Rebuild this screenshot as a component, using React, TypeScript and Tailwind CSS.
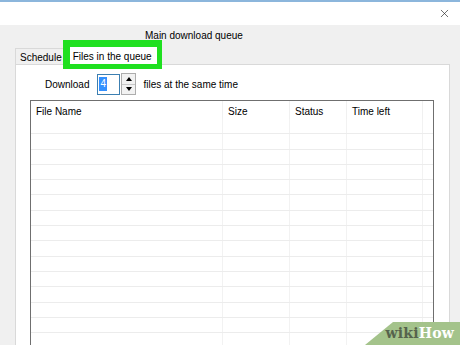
import { X } from "lucide-react";

const columns = [
    { label: "File Name", width: "w-[192px]" },
    { label: "Size", width: "w-[67px]" },
    { label: "Status", width: "w-[57px]" },
    { label: "Time left", width: "w-[76px]" },
];

const rows = Array.from({ length: 15 }, (_, i) => i);

function SpinBox() {
    return (
        <div className="flex items-center h-[22px]">
            <div className="w-[23px] h-[21px] border border-[#3c7fb1] bg-white flex items-center pl-[1px]">
                <span className="bg-[#3390ff] text-white leading-[14px] px-[1px]">4</span>
            </div>
            <div className="ml-[1px] w-[15px] h-[22px] border border-[#adadad] bg-[#f2f2f2] flex flex-col">
                <div className="flex-1 flex items-center justify-center border-b border-[#c8c8c8]">
                    <div className="w-0 h-0 border-l-[3px] border-r-[3px] border-b-[4px] border-l-transparent border-r-transparent border-b-black" />
                </div>
                <div className="flex-1 flex items-center justify-center">
                    <div className="w-0 h-0 border-l-[3px] border-r-[3px] border-t-[4px] border-l-transparent border-r-transparent border-t-black" />
                </div>
            </div>
        </div>
    );
}

function WikiHowBadge() {
    return (
        <div className="absolute right-0 bottom-0 h-[23px] w-[95px] overflow-hidden">
            <div className="absolute inset-0 bg-[#a4c38b] [clip-path:polygon(28px_0,100%_0,100%_100%,0_100%)]" />
            <div
                className="absolute right-[6px] top-[3px] text-[14px] font-bold leading-[16px] tracking-[0.2px]"
                style={{ fontFamily: '"DejaVu Serif", "Liberation Serif", serif' }}
            >
                <span className="text-[#56634d]">wiki</span>
                <span className="text-white">How</span>
            </div>
        </div>
    );
}

export default function App() {
    return (
        <div
            className="relative w-[460px] h-[345px] overflow-hidden bg-[#f0f0f0] text-[10px] text-black"
            style={{ fontFamily: '"Liberation Sans", Arial, sans-serif' }}
        >
            <div className="h-[2px] bg-[#8cb6dc]" />
            <div className="h-[23px] bg-white flex items-center justify-end pr-[9px]">
                <X className="w-[13px] h-[13px] text-[#222]" strokeWidth={1.2} />
            </div>

            <div className="pl-[145px] pt-[5px] h-[19px] leading-[12px]">Main download queue</div>

            <div className="flex items-end h-[20px] pl-[15px]">
                <div className="h-[16px] border border-b-0 border-[#d9d9d9] bg-[#f0f0f0] pl-[4px] pr-[7px] pt-[2px] flex items-center">
                    Schedule
                </div>
                <div className="relative h-[17px] bg-white text-black flex items-center pl-[3px] pr-[5px] pt-[2px] leading-[12px]">
                    Files in the queue
                    <div className="absolute left-[-7px] right-[-5px] top-[-7px] bottom-[-5px] border-[7px] border-b-[5px] border-r-[5px] border-[#1fe020]" />
                </div>
            </div>

            <div className="ml-[15px] w-[435px] h-[290px] bg-white border border-[#d9d9d9] pt-[8px]">
                <div className="flex items-center h-[22px] pl-[29px]">
                    <span className="mr-[8px]">Download</span>
                    <SpinBox />
                    <span className="ml-[7px]">files at the same time</span>
                </div>

                <div className="ml-[14px] mt-[5px] w-[404px] h-[260px] border border-[#6f6f6f] overflow-hidden">
                    <div className="flex h-[18px]">
                        {columns.map((c) => (
                            <div key={c.label} className={`${c.width} border-r border-[#f0f0f0] pl-[5px] pt-[5px] leading-[12px]`}>
                                {c.label}
                            </div>
                        ))}
                    </div>
                    {rows.map((r) => (
                        <div key={r} className="flex h-[15.3px] border-b border-[#ececec]">
                            {columns.map((c) => (
                                <div key={c.label} className={`${c.width} border-r border-[#f2f2f2]`} />
                            ))}
                        </div>
                    ))}
                </div>
            </div>

            <WikiHowBadge />
        </div>
    );
}
